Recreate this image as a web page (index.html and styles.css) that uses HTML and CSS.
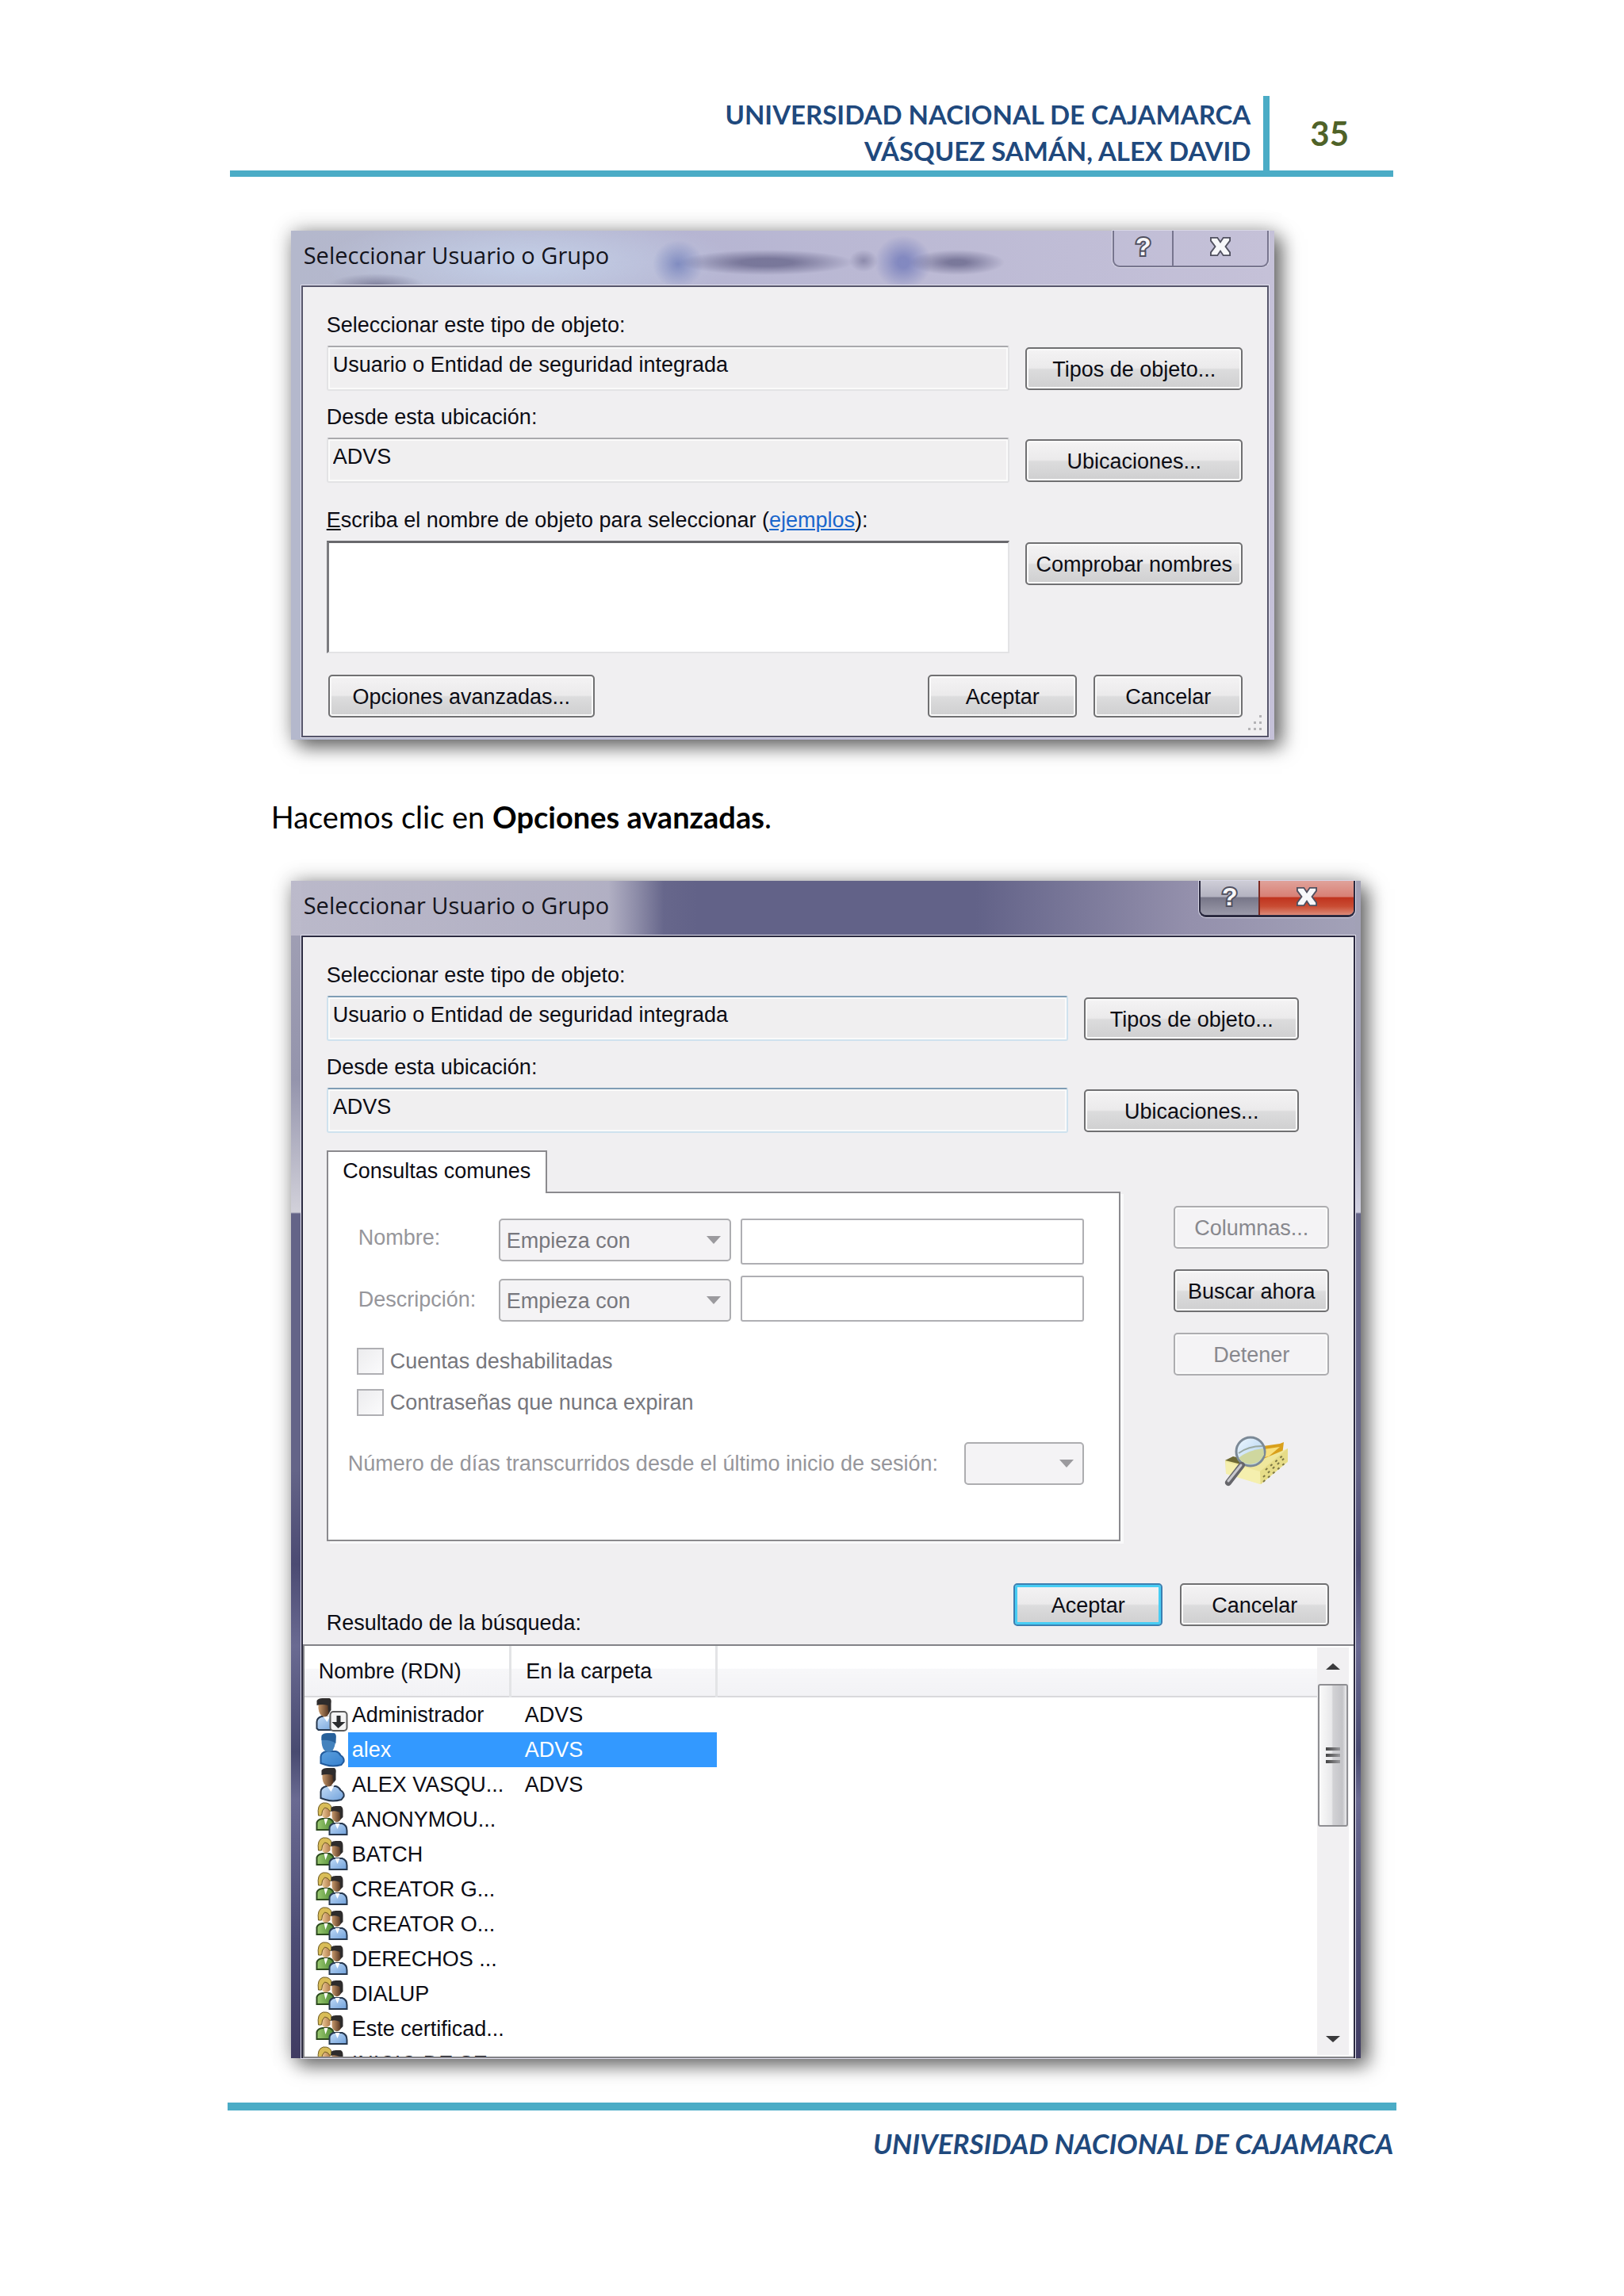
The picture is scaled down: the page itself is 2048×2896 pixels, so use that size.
FILE: index.html
```html
<!doctype html>
<html lang="es">

<head>
    <meta charset="utf-8">
    <meta name="viewport" content="width=device-width, initial-scale=1">
    <title>Seleccionar Usuario o Grupo</title>
    <link rel="stylesheet" href="styles.css">
</head>

<body>
    <!-- iconos compartidos -->
    <svg class="defs" width="0" height="0" aria-hidden="true">
        <defs>
            <linearGradient id="gSkin" x1="0" x2="1"><stop offset="0" stop-color="#c99a6c" /><stop offset="1" stop-color="#4d2f1d" /></linearGradient>
            <linearGradient id="gFair" x1="0" x2="1"><stop offset="0" stop-color="#f3d2a0" /><stop offset="1" stop-color="#b27c4c" /></linearGradient>
            <linearGradient id="gShirt" x1="0" x2="1" y2="1"><stop offset="0" stop-color="#c3dcf7" /><stop offset="1" stop-color="#6fa0da" /></linearGradient>
            <linearGradient id="gSel" x1="0" x2="1" y2="1"><stop offset="0" stop-color="#5c9fdc" /><stop offset="1" stop-color="#3580cf" /></linearGradient>
            <linearGradient id="gGreen" x1="0" x2="1"><stop offset="0" stop-color="#9ccb72" /><stop offset="1" stop-color="#4f8a34" /></linearGradient>
            <linearGradient id="gLens" x1="0" x2="1" y2="1"><stop offset="0" stop-color="#eef8ff" /><stop offset="1" stop-color="#a9cdee" /></linearGradient>
            <symbol id="user" viewBox="0 0 40 44">
                <path d="M6 39V31q0-5 7-7h12q4 1 6 5 5 3 4 8l-3 4q-11 3-20 0z" fill="url(#gShirt)" stroke="#27384f" stroke-width="2" />
                <path d="M14 24l5 7 4-8z" fill="#fff" />
                <path d="M8 6l14-3v16q-3 7-8 5-5-2-6-10z" fill="url(#gSkin)" />
                <path d="M7 10V4q2-3 7-3h9q3 1 2 7v8l-3 4q-1-5-1-10-7-2-14 0z" fill="#2e2c2c" />
            </symbol>
            <symbol id="user-sel" viewBox="0 0 40 44">
                <path d="M6 39V31q0-5 7-7h12q4 1 6 5 5 3 4 8l-3 4q-11 3-20 0z" fill="url(#gSel)" stroke="#215a9c" stroke-width="2" />
                <path d="M7 6q2-4 8-4h8q3 1 2 7-1 11-5 15-6 3-10-2-3-4-3-12z" fill="#4382bd" />
                <path d="M7 10V4q2-3 7-3h9q3 1 2 7v6q-8-5-18-4z" fill="#27609a" />
            </symbol>
            <symbol id="admin" viewBox="0 0 40 44">
                <path d="M1 39V31q0-5 6-7h12q8 3 8 14l-3 3H3z" fill="url(#gShirt)" stroke="#27384f" stroke-width="2" />
                <path d="M9 24l5 7 4-8z" fill="#fff" />
                <path d="M3 6l14-3v16q-3 7-8 5-5-2-6-10z" fill="url(#gSkin)" />
                <path d="M1 10V4q2-3 7-3h9q3 1 2 7v8l-3 4q-1-5-1-10-7-2-14 0z" fill="#2e2c2c" />
                <rect x="18" y="18" width="21" height="24" rx="4" fill="#f4f4f4" stroke="#5c5c5c" stroke-width="2" />
                <path d="M26 23h5v8h6l-9 8-8-8h6z" fill="#2b2d2f" />
            </symbol>
            <symbol id="group" viewBox="0 0 40 44">
                <path d="M1 35V26q1-4 7-5h9q5 2 5 6v8z" fill="url(#gGreen)" stroke="#2c4a1e" stroke-width="2" />
                <path d="M10 21l2 8 3-8z" fill="#fff" />
                <path d="M6 5h12v12q-5 6-10 1z" fill="url(#gFair)" />
                <path d="M3 17Q1 3 9 1q10-1 11 8l-2 3q-3-5-7-5-4 3-4 10z" fill="#d9bd58" stroke="#6f5a20" />
                <path d="M17 41V33q0-4 5-6h11q6 2 6 9v5z" fill="url(#gShirt)" stroke="#27384f" stroke-width="2" />
                <path d="M24 27l3 7 3-7z" fill="#fff" />
                <path d="M20 9l12-1v12q-2 6-7 5-5-2-5-8z" fill="url(#gSkin)" />
                <path d="M19 12V7q2-2 6-2h6q3 1 3 6v8l-3 3q-1-5-1-9-6-3-11-1z" fill="#2e2c2c" />
            </symbol>
            <symbol id="cross" viewBox="0 0 32 28">
                <path d="M3 2h9l4 6 4-6h9v4l-6 8 6 8v4h-9l-4-6-4 6H3v-4l6-8-6-8z" fill="#f7f7f9" stroke="#50505f" stroke-width="2" />
            </symbol>
        </defs>
    </svg>

    <div class="page">
        <header class="page-head">
            <div class="names">UNIVERSIDAD NACIONAL DE CAJAMARCA<br>VÁSQUEZ SAMÁN, ALEX DAVID</div>
            <div class="number">35</div>
        </header>

        <section class="dialog dialog-simple">
            <div class="titlebar">
                <h2>Seleccionar Usuario o Grupo</h2>
                <div class="win-buttons">
                    <button class="win-help" type="button">?</button>
                    <button class="win-close" type="button" aria-label="Cerrar"><svg width="30" height="26"><use href="#cross" /></svg></button>
                </div>
            </div>
            <form class="client">
                <div class="field">
                    <label for="tipo1">Seleccionar este tipo de objeto:</label>
                    <input class="readonly" id="tipo1" type="text" value="Usuario o Entidad de seguridad integrada" readonly>
                    <button class="btn" type="button">Tipos de objeto...</button>
                </div>
                <div class="field">
                    <label for="ubic1">Desde esta ubicación:</label>
                    <input class="readonly" id="ubic1" type="text" value="ADVS" readonly>
                    <button class="btn" type="button">Ubicaciones...</button>
                </div>
                <div class="field field-names">
                    <label for="nombres"><u>E</u>scriba el nombre de objeto para seleccionar (<a href="#ejemplos">ejemplos</a>):</label>
                    <textarea id="nombres"></textarea>
                    <button class="btn" type="button">Comprobar nombres</button>
                </div>
                <div class="actions">
                    <button class="btn btn-advanced" type="button">Opciones avanzadas...</button>
                    <button class="btn btn-action" type="button">Aceptar</button>
                    <button class="btn btn-action" type="button">Cancelar</button>
                </div>
                <svg class="grip" width="22" height="22" fill="#b4b3b6"><path d="M16 0h3v3h-3zM9 8h3v3H9zM16 8h3v3h-3zM2 16h3v3H2zM9 16h3v3H9zM16 16h3v3h-3z" /></svg>
            </form>
        </section>

        <p class="step">Hacemos clic en <b>Opciones avanzadas</b>.</p>

        <section class="dialog dialog-advanced">
            <div class="titlebar">
                <h2>Seleccionar Usuario o Grupo</h2>
                <div class="win-buttons">
                    <button class="win-help" type="button">?</button>
                    <button class="win-close" type="button" aria-label="Cerrar"><svg width="30" height="26"><use href="#cross" /></svg></button>
                </div>
            </div>
            <form class="client">
                <div class="form-body">
                    <div class="field">
                        <label for="tipo2">Seleccionar este tipo de objeto:</label>
                        <input class="readonly" id="tipo2" type="text" value="Usuario o Entidad de seguridad integrada" readonly>
                        <button class="btn" type="button">Tipos de objeto...</button>
                    </div>
                    <div class="field">
                        <label for="ubic2">Desde esta ubicación:</label>
                        <input class="readonly" id="ubic2" type="text" value="ADVS" readonly>
                        <button class="btn" type="button">Ubicaciones...</button>
                    </div>

                    <div class="query">
                        <div class="tabs">
                            <button class="tab" type="button">Consultas comunes</button>
                            <div class="panel">
                                <div class="criteria">
                                    <label for="nomOp">Nombre:</label>
                                    <select id="nomOp" disabled><option>Empieza con</option></select>
                                    <input type="text" aria-label="Nombre" disabled>
                                </div>
                                <div class="criteria criteria-desc">
                                    <label for="descOp">Descripción:</label>
                                    <select id="descOp" disabled><option>Empieza con</option></select>
                                    <input type="text" aria-label="Descripción" disabled>
                                </div>
                                <div class="checks">
                                    <label><input type="checkbox" disabled>Cuentas deshabilitadas</label>
                                    <label><input type="checkbox" disabled>Contraseñas que nunca expiran</label>
                                </div>
                                <div class="days">
                                    <label for="dias">Número de días transcurridos desde el último inicio de sesión:</label>
                                    <select id="dias" disabled><option></option></select>
                                </div>
                            </div>
                        </div>
                        <div class="side">
                            <button class="btn" type="button" disabled>Columnas...</button>
                            <button class="btn" type="button">Buscar ahora</button>
                            <button class="btn" type="button" disabled>Detener</button>
                            <svg class="search-icon" width="82" height="64" viewBox="0 0 82 64">
                                <path d="M28 16l42-6 5-2-2 16-38 10z" fill="#d9a01c" />
                                <path d="M36 19l34-5-14 12-22 4z" fill="#f8df7c" />
                                <path d="M1 31l10-4 24 8 45-19v17L46 61 2 47z" fill="#efe79c" />
                                <path d="M1 31l10-5 20 5-2 7z" fill="#6e6a35" />
                                <path d="M2 33l43 12v16L2 48z" fill="#f5efae" />
                                <path d="M45 45l35-29v16L46 61z" fill="#e6dc88" />
                                <path d="M49 52l28-25M49 58l29-25M52 43l24-20" stroke="#7c7644" stroke-width="2" stroke-dasharray="3 5" fill="none" />
                                <circle cx="33" cy="20" r="18" fill="url(#gLens)" stroke="#7b8996" stroke-width="3" />
                                <path d="M18 28q12-10 31-12l1 8q-5 11-17 12-9 0-15-8z" fill="#cfd79f" />
                                <path d="M18 22q12-9 30-9" stroke="#9aa9a0" stroke-width="2" fill="none" />
                                <path d="M22 37L5 59" stroke="#66666b" stroke-width="8" stroke-linecap="round" />
                                <path d="M21 37L5 57" stroke="#c9c9cf" stroke-width="3" stroke-linecap="round" />
                            </svg>
                        </div>
                    </div>

                    <div class="result-bar">
                        <span class="result-label" id="resultado">Resultado de la búsqueda:</span>
                        <button class="btn btn-action btn-default" type="button">Aceptar</button>
                        <button class="btn btn-action" type="button">Cancelar</button>
                    </div>
                </div>

                <div class="list">
                    <table aria-labelledby="resultado">
                        <thead>
                            <tr><th>Nombre (RDN)</th><th>En la carpeta</th><th></th></tr>
                        </thead>
                        <tbody>
                            <tr><td><div class="obj"><svg><use href="#admin" /></svg><span>Administrador</span></div></td><td>ADVS</td><td></td></tr>
                            <tr class="selected"><td><div class="obj"><svg><use href="#user-sel" /></svg><span>alex</span></div></td><td>ADVS</td><td></td></tr>
                            <tr><td><div class="obj"><svg><use href="#user" /></svg><span>ALEX VASQU...</span></div></td><td>ADVS</td><td></td></tr>
                            <tr><td><div class="obj"><svg><use href="#group" /></svg><span>ANONYMOU...</span></div></td><td></td><td></td></tr>
                            <tr><td><div class="obj"><svg><use href="#group" /></svg><span>BATCH</span></div></td><td></td><td></td></tr>
                            <tr><td><div class="obj"><svg><use href="#group" /></svg><span>CREATOR G...</span></div></td><td></td><td></td></tr>
                            <tr><td><div class="obj"><svg><use href="#group" /></svg><span>CREATOR O...</span></div></td><td></td><td></td></tr>
                            <tr><td><div class="obj"><svg><use href="#group" /></svg><span>DERECHOS ...</span></div></td><td></td><td></td></tr>
                            <tr><td><div class="obj"><svg><use href="#group" /></svg><span>DIALUP</span></div></td><td></td><td></td></tr>
                            <tr><td><div class="obj"><svg><use href="#group" /></svg><span>Este certificad...</span></div></td><td></td><td></td></tr>
                            <tr><td><div class="obj"><svg><use href="#group" /></svg><span>INICIO DE SE...</span></div></td><td></td><td></td></tr>
                        </tbody>
                    </table>
                    <div class="scrollbar">
                        <svg width="18" height="8"><path d="M0 8L9 0l9 8z" fill="#3a3a3c" /></svg>
                        <div class="thumb"><i></i><i></i><i></i></div>
                        <svg width="18" height="8"><path d="M0 0l9 8 9-8z" fill="#3a3a3c" /></svg>
                    </div>
                </div>
            </form>
        </section>

        <footer class="page-foot">UNIVERSIDAD NACIONAL DE CAJAMARCA</footer>
    </div>
</body>

</html>
```
FILE: styles.css
```css
* {
    box-sizing: border-box;
}

body {
    margin: 0;
    background: #fff;
    font-family: "Liberation Sans", Arial, sans-serif;
    font-size: 27px;
    color: #0c0c14;
}

button, input, select, textarea {
    font: inherit;
    color: inherit;
    margin: 0;
}

.defs {
    position: absolute;
}

.page {
    padding: 121px 14% 160px;
}

/* cabecera y pie del documento */
.page-head {
    display: flex;
    justify-content: flex-end;
    margin: 0 4px 68px 3px;
    border-bottom: 8px solid #4bacc6;
    font-family: Lato, Calibri, sans-serif;
    font-weight: bold;
}

.names {
    padding-right: 16px;
    border-right: 8px solid #4bacc6;
    font-size: 33px;
    line-height: 46px;
    text-align: right;
    color: #1f497d;
}

.number {
    width: 156px;
    padding-left: 51px;
    font-size: 42px;
    line-height: 94px;
    color: #4f6228;
}

.page-foot {
    margin-top: 56px;
    padding: 18px 4px 0 0;
    border-top: 10px solid #4bacc6;
    font: italic bold 35px/46px Lato, Calibri, sans-serif;
    text-align: right;
    color: #1f497d;
}

.step {
    margin: 72px 55px 56px;
    font: 38px/50px Lato, Calibri, sans-serif;
    color: #000;
}

/* ventanas */
.dialog {
    padding: 0 7px 3px 13px;
    box-shadow: 0 0 24px rgba(0, 0, 0, .3), 10px 10px 22px rgba(0, 0, 0, .5);
}

.dialog-simple {
    margin: 0 154px 0 80px;
    background:
        radial-gradient(110px 16px at 600px 40px, rgba(100, 98, 135, .75) 30%, transparent),
        radial-gradient(18px 14px at 722px 38px, rgba(110, 108, 145, .6), transparent),
        radial-gradient(60px 16px at 840px 40px, rgba(100, 98, 135, .75) 20%, transparent),
        radial-gradient(32px 30px at 488px 42px, rgba(122, 135, 190, .9), transparent),
        radial-gradient(36px 34px at 772px 40px, rgba(125, 132, 190, .9) 20%, transparent),
        radial-gradient(60px 14px at 108px 68px, rgba(110, 110, 140, .7), transparent),
        radial-gradient(260px 60px at 300px 40px, #c4d0e8, transparent),
        linear-gradient(90deg, #b4b8cc, #b6b5d2 40%, #c5c1d8);
}

.dialog-advanced {
    margin: 0 45px 0 80px;
    padding-bottom: 0;
    background:
        linear-gradient(90deg, rgba(194, 192, 208, .8) 400px, transparent 470px) 0 0 / 100% 69px no-repeat,
        linear-gradient(#a3a2b6, #9494ac 250px, #d2d1da 418px, transparent 420px) 0 0 / 13px 100% no-repeat,
        linear-gradient(#a3a2b6, #9e9eb6 250px, #cfcfe0 418px, transparent 420px) 100% 0 / 7px 100% no-repeat,
        linear-gradient(90deg, #9c9bb0, #626288 38%, #626288 64%, #9490ac 84%, #a3a2b8) 0 0 / 100% 70px no-repeat,
        linear-gradient(#646488 50%, #4b4a72 58%, #6a6a92 65%, #484a70 74%, #6a6a92 78%, #4c4c74 90%, #403c62);
}

.titlebar {
    display: flex;
    justify-content: space-between;
    height: 69px;
}

.titlebar h2 {
    margin: 6px 0 0 3px;
    font: 29px/50px "Open Sans", "Segoe UI", sans-serif;
    color: #14141c;
}

.win-buttons {
    display: flex;
    height: 46px;
    border: 2px solid #77758e;
    border-top: 0;
    border-radius: 0 0 9px 9px;
    box-shadow: 0 0 0 1px #d9d7e6;
    overflow: hidden;
}

.win-buttons button {
    display: flex;
    align-items: center;
    justify-content: center;
    border: 0;
    padding: 0 0 4px;
    background: none;
}

.win-buttons .win-help {
    width: 73px;
    font: bold 32px/40px "Liberation Sans", Arial, sans-serif;
    color: #f7f7f9;
    -webkit-text-stroke: 4px #50505f;
    paint-order: stroke fill;
}

.win-buttons .win-close {
    width: 120px;
    border-left: 2px solid #77758e;
}

.dialog-advanced .win-buttons {
    border-color: #2b2a40;
    border-bottom-width: 3px;
}

.dialog-advanced .win-help {
    background: linear-gradient(#cfced8, #b3b2c0 46%, #777688 50%, #9b9aaa);
}

.dialog-advanced .win-close {
    border-color: #7c2a22;
    background: linear-gradient(#e0a29a, #d88075 46%, #c0341f 50%, #c94c33 75%, #dc8a78);
}

.client {
    display: block;
    position: relative;
    border: 2px solid #55546a;
    outline: 1px solid #e2e1ee;
    background: #f0eff1;
}

.dialog-simple .client {
    padding: 30px 31px 23px 30px;
}

.dialog-advanced .client {
    border-color: #2b2a40;
    border-bottom: 0;
}

.form-body {
    padding: 30px 31px 0 30px;
}

/* campos */
.field {
    display: grid;
    grid-template-columns: 1fr 274px;
    column-gap: 20px;
    row-gap: 8px;
    align-items: start;
    margin-bottom: 15px;
}

.form-body .field {
    margin-right: 38px;
    grid-template-columns: 1fr 271px;
}

.field label {
    grid-column: 1 / -1;
    line-height: 36px;
}

.field .btn {
    margin-top: 2px;
}

.field a {
    color: #1a66cc;
}

.readonly {
    width: 100%;
    height: 57px;
    padding: 0 6px 8px;
    border: 2px solid #e3e3e5;
    border-top-color: #a9a9ad;
    border-radius: 3px;
    background: #f0eff0;
    box-shadow: inset 0 0 0 2px #fafafa;
}

.dialog-advanced .readonly {
    border-color: #cfe2ee;
    border-top-color: #7f9db5;
}

.field-names {
    margin: 29px 0 27px;
}

.field textarea {
    width: 100%;
    height: 142px;
    border: 2px solid #e3e3e5;
    border-top: 3px solid #69696d;
    border-left: 3px solid #7b7b7f;
    background: #fff;
    resize: none;
}

.btn {
    height: 54px;
    padding: 2px 0 0;
    border: 2px solid #707072;
    border-radius: 5px;
    background: linear-gradient(#f4f3f4, #ebeaeb 48%, #dcdcdd 52%, #cfcfd0);
    box-shadow: inset 0 0 0 2px #fafafa;
    white-space: nowrap;
}

.btn:disabled {
    border-color: #adadb0;
    background: #f4f3f5;
    color: #88888e;
}

.btn-default {
    border-color: #3c7fb1;
    box-shadow: inset 0 0 0 3px #48cdf4;
}

.actions {
    display: flex;
    gap: 21px;
}

.btn-action {
    width: 188px;
}

.btn-advanced {
    width: 336px;
    margin: 0 auto 0 2px;
}

.grip {
    position: absolute;
    right: 4px;
    bottom: 4px;
}

/* consultas */
.query {
    display: flex;
    gap: 67px;
    margin-top: 22px;
}

.tabs {
    flex: 1;
}

.tab {
    display: block;
    position: relative;
    width: 278px;
    height: 54px;
    margin-bottom: -2px;
    padding: 0 0 4px;
    border: 2px solid #8b8a8e;
    border-bottom: 0;
    background: #fff;
}

.panel {
    padding: 32px 44px 69px 25px;
    border: 2px solid #8b8a8e;
    background: #fff;
    box-shadow: 4px 3px 0 #f9f9fa;
    color: #96969b;
}

.criteria {
    display: grid;
    grid-template-columns: 165px 293px 1fr;
    column-gap: 12px;
    align-items: start;
    margin: 0 0 14px 13px;
}

.criteria-desc {
    align-items: end;
}

.criteria label {
    line-height: 48px;
}

.criteria-desc label {
    line-height: 56px;
}

.criteria input {
    width: 100%;
    height: 58px;
    border: 2px solid #afafb3;
    border-radius: 3px;
    background: #fff;
}

.panel select {
    appearance: none;
    height: 54px;
    padding: 2px 8px 0;
    border: 2px solid #adadb0;
    border-radius: 5px;
    background: #f4f3f5 url("data:image/svg+xml,%3Csvg xmlns='http://www.w3.org/2000/svg' width='18' height='10'%3E%3Cpath d='M0 0h18l-9 10z' fill='%239b9a9e'/%3E%3C/svg%3E") no-repeat right 11px center;
    color: #77777d;
    opacity: 1;
}

.checks {
    display: flex;
    flex-direction: column;
    gap: 18px;
    margin: 33px 0 33px 11px;
    color: #77777d;
}

.checks label {
    display: flex;
    align-items: center;
    gap: 8px;
    line-height: 34px;
}

.checks input {
    appearance: none;
    width: 34px;
    height: 34px;
    border: 2px solid #afafb3;
    background: linear-gradient(135deg, #ececee, #fbfbfc);
}

.days {
    display: flex;
    align-items: center;
    justify-content: space-between;
}

.days select {
    width: 151px;
}

.side {
    display: flex;
    flex-direction: column;
    gap: 26px;
    width: 196px;
    padding-top: 70px;
}

.search-icon {
    margin: 50px 0 0 64px;
}

.result-bar {
    display: flex;
    align-items: flex-end;
    gap: 22px;
    padding: 53px 0 9px;
}

.result-bar .btn {
    margin-bottom: 14px;
}

.result-label {
    flex: 1;
    line-height: 36px;
}

/* lista de resultados */
.list {
    display: flex;
    height: 522px;
    padding-right: 6px;
    border: 2px solid #828287;
    border-right-width: 0;
    background: #fff;
    overflow: hidden;
}

.list table {
    flex: 1;
    align-self: flex-start;
    table-layout: fixed;
    border-collapse: collapse;
}

.list th {
    width: 260px;
    height: 64px;
    padding: 2px 0 0 18px;
    border-right: 3px solid #e3e4e6;
    border-bottom: 2px solid #d9d9dc;
    background: linear-gradient(#fff 45%, #f7f7f9 46%, #f2f2f5);
    font-weight: normal;
    text-align: left;
}

.list th:last-child {
    width: auto;
    border-right: 0;
}

.list td {
    height: 44px;
    padding: 0;
    white-space: nowrap;
}

.list td + td {
    padding-left: 18px;
}

.obj {
    display: flex;
    margin-left: 14px;
    line-height: 44px;
}

.obj svg {
    width: 41px;
    height: 44px;
}

.obj span {
    flex: 1;
    padding-left: 5px;
}

.selected {
    color: #fff;
}

.selected .obj span,
.selected td:nth-child(2) {
    background: #3399ff;
}

.scrollbar {
    display: flex;
    flex-direction: column;
    align-items: center;
    width: 40px;
    margin: 2px 0;
    padding: 20px 0 16px;
    background: #f1f0f2;
}

.thumb {
    display: flex;
    flex-direction: column;
    align-items: center;
    justify-content: center;
    gap: 4px;
    width: 38px;
    height: 180px;
    margin: 18px 0 auto;
    border: 2px solid #8f8f93;
    border-radius: 3px;
    background: linear-gradient(90deg, #fafafa, #e8e8ea 45%, #d2d2d5 50%, #c4c4c8 85%, #ececee);
}

.thumb i {
    width: 18px;
    height: 4px;
    background: linear-gradient(90deg, #444, #9a9a9e);
}
```
